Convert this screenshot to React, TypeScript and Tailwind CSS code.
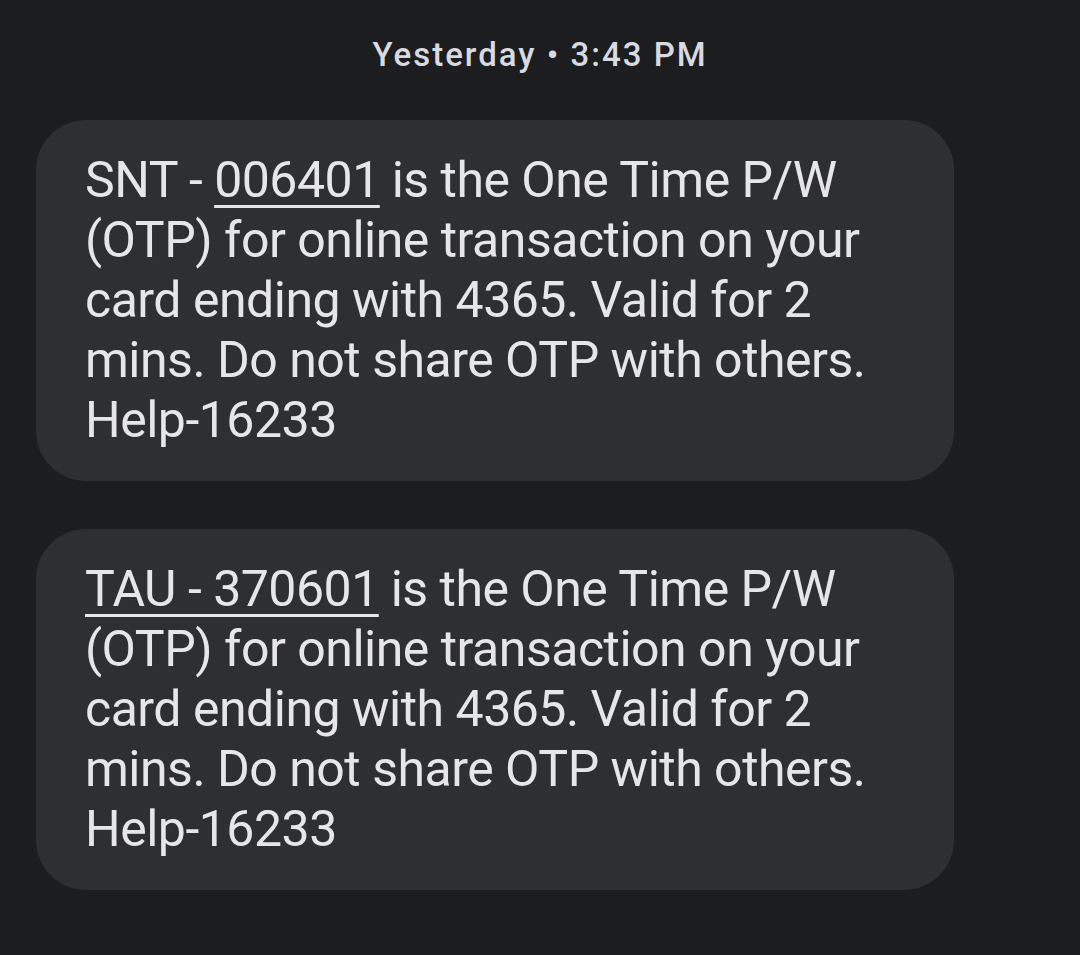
import React from "react";

function Bubble({ prefix, code, linkPrefix }: { prefix: string; code: string; linkPrefix: boolean }) {
  return (
    <div className="w-[918px] rounded-[50px] bg-[#2e2f33] pl-[49px] pr-[40px] pt-[30px] pb-[31px]">
      <p className="text-[50px] leading-[60px] text-[#e6e6ea] tracking-[-0.5px]">
        {linkPrefix ? (
          <span className="underline decoration-[3px] underline-offset-[8px]">{prefix + code}</span>
        ) : (
          <>
            {prefix}
            <span className="underline decoration-[3px] underline-offset-[8px]">{code}</span>
          </>
        )}{" "}
        is the One Time P/W
        <br />
        (OTP) for online transaction on your
        <br />
        card ending with 4365. Valid for 2
        <br />
        mins. Do not share OTP with others.
        <br />
        Help-16233
      </p>
    </div>
  );
}

export default function App() {
  return (
    <div className="w-[1080px] h-[955px] bg-[#1c1d1f] font-['Roboto',sans-serif] flex flex-col">
      <div className="h-[120px] flex justify-center pt-[35px]">
        <span className="text-[33px] leading-[40px] font-medium tracking-[2px] text-[#d9d9e0]">
          Yesterday • 3:43 PM
        </span>
      </div>
      <div className="flex flex-col gap-[48px] pl-[36px]">
        <Bubble prefix="SNT - " code="006401" linkPrefix={false} />
        <Bubble prefix="TAU - " code="370601" linkPrefix={true} />
      </div>
    </div>
  );
}
